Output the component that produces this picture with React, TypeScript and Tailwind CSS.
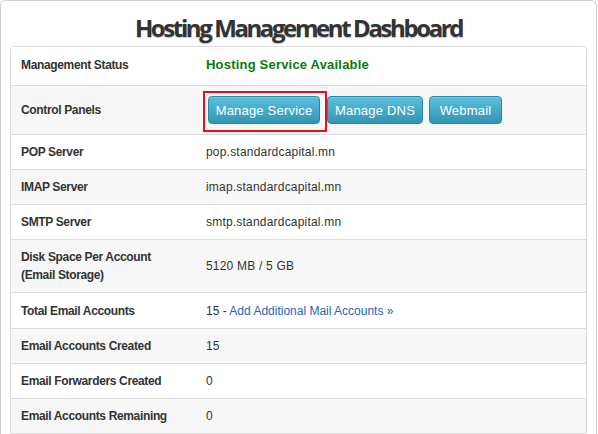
import { ReactNode } from "react";

/* ---------------------------------------------
   DATA
--------------------------------------------- */

type Row = {
  label: ReactNode;
  value: ReactNode;
  h: string;
};

function InfoButton({ children, w }: { children: ReactNode; w: string }) {
  return (
    <button
      className={`
        ${w} h-[28px] rounded-[4px]
        border border-[#2a87a3]
        bg-gradient-to-b from-[#5bc0de] to-[#2f96b4]
        text-white text-[13px] leading-none
        shadow-[inset_0_1px_0_rgba(255,255,255,0.2)]
      `}
    >
      {children}
    </button>
  );
}

const rows: Row[] = [
  {
    label: "Management Status",
    value: (
      <span className="font-bold text-[13px] tracking-[0.2px] text-[#0a7a0a]">
        Hosting Service Available
      </span>
    ),
    h: "h-[38px] pb-[3px]",
  },
  {
    label: "Control Panels",
    value: (
      <div className="flex items-center ml-[2px]">
        <div className="relative">
          <InfoButton w="w-[112px]">Manage Service</InfoButton>
          {/* highlight box */}
          <div className="absolute -left-[5px] -right-[7px] -top-[5px] -bottom-[8px] border-2 border-[#e3101e] pointer-events-none" />
        </div>
        <div className="ml-[7px]">
          <InfoButton w="w-[96px]">Manage DNS</InfoButton>
        </div>
        <div className="ml-[6px]">
          <InfoButton w="w-[73px]">Webmail</InfoButton>
        </div>
      </div>
    ),
    h: "h-[49px]",
  },
  { label: "POP Server", value: "pop.standardcapital.mn", h: "h-[35px]" },
  { label: "IMAP Server", value: "imap.standardcapital.mn", h: "h-[35px]" },
  { label: "SMTP Server", value: "smtp.standardcapital.mn", h: "h-[35px]" },
  {
    label: (
      <>
        Disk Space Per Account
        <br />
        (Email Storage)
      </>
    ),
    value: "5120 MB / 5 GB",
    h: "h-[53px]",
  },
  {
    label: "Total Email Accounts",
    value: (
      <span className="tracking-normal">
        15 -{" "}
        <a className="text-[#2a64b8]">Add Additional Mail Accounts »</a>
      </span>
    ),
    h: "h-[36px]",
  },
  { label: "Email Accounts Created", value: "15", h: "h-[35px]" },
  { label: "Email Forwarders Created", value: "0", h: "h-[35px]" },
  { label: "Email Accounts Remaining", value: "0", h: "h-[35px]" },
];

/* ---------------------------------------------
   PAGE
--------------------------------------------- */

export default function App() {
  return (
    <div className="w-[598px] h-[434px] overflow-hidden bg-white font-['Liberation_Sans',Arial,sans-serif]">
      <div className="w-[597px] border border-b-0 border-[#cccccc] rounded-t-[6px] pb-4">
        <h1
          className="
            h-[45px] pt-[12px] text-center
            font-['Open_Sans',sans-serif] font-bold
            text-[24px] leading-[30px] tracking-[-2.4px]
            text-[#333333] [text-shadow:0_1px_1px_rgba(0,0,0,0.25)]
          "
        >
          Hosting Management Dashboard
        </h1>

        <div className="mx-[9px] border border-[#dddddd] rounded-t-[4px] overflow-hidden">
          {rows.map((r, i) => (
            <div
              key={i}
              className={`flex items-center ${r.h} ${
                i > 0 ? "border-t border-[#dddddd]" : ""
              } ${i % 2 === 1 ? "bg-[#f7f7f7]" : "bg-white"}`}
            >
              <div className="w-[195px] pl-[10px] font-bold text-[12px] leading-[18px] tracking-[-0.35px] text-[#333333]">
                {r.label}
              </div>
              <div className="flex-1 text-[12px] tracking-[0.2px] text-[#333333]">
                {r.value}
              </div>
            </div>
          ))}
        </div>
      </div>
    </div>
  );
}
